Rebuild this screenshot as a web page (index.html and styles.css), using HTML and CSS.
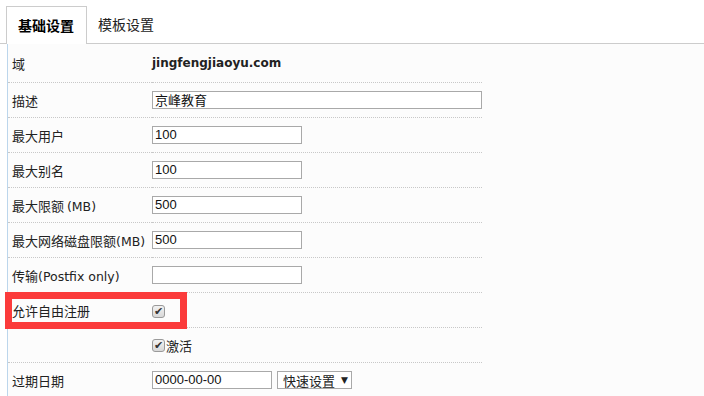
FILE: index.html
```html
<!DOCTYPE html>
<html lang="zh-CN">
<head>
    <meta charset="UTF-8">
    <title>域设置</title>
    <link rel="stylesheet" href="styles.css">
</head>
<body>

    <div class="tabs">
        <div class="tab active">基础设置</div>
        <div class="tab">模板设置</div>
    </div>

    <div class="panel">
        <table class="form">
            <tr class="first">
                <td class="label">域</td>
                <td class="domain">jingfengjiaoyu.com</td>
            </tr>
            <tr>
                <td class="label">描述</td>
                <td><span class="input wide">京峰教育</span></td>
            </tr>
            <tr>
                <td class="label">最大用户</td>
                <td><span class="input">100</span></td>
            </tr>
            <tr>
                <td class="label">最大别名</td>
                <td><span class="input">100</span></td>
            </tr>
            <tr>
                <td class="label">最大限额 <span class="latin">(MB)</span></td>
                <td><span class="input">500</span></td>
            </tr>
            <tr>
                <td class="label">最大网络磁盘限额<span class="latin">(MB)</span></td>
                <td><span class="input">500</span></td>
            </tr>
            <tr>
                <td class="label">传输<span class="latin">(Postfix only)</span></td>
                <td><span class="input"></span></td>
            </tr>
            <tr>
                <td class="label">允许自由注册</td>
                <td><span class="check">&#10004;</span></td>
            </tr>
            <tr>
                <td class="label"></td>
                <td><span class="check">&#10004;</span><span class="check-text">激活</span></td>
            </tr>
            <tr>
                <td class="label">过期日期</td>
                <td>
                    <div class="date-row">
                        <span class="input date">0000-00-00</span>
                        <span class="select">快速设置 <span class="arrow">&#9660;</span></span>
                    </div>
                </td>
            </tr>
        </table>
    </div>

    <div class="highlight"></div>

</body>
</html>
```

FILE: styles.css
```css
body {
    margin: 0;
    background-color: #fff;
    font-family: "DejaVu Sans", "Noto Sans CJK SC", sans-serif;
    font-size: 13px;
    color: #222;
    position: relative;
    height: 396px;
    overflow: hidden;
}
.tabs {
    display: flex;
    padding: 6px 0 0 6px;
    border-bottom: 1px solid #ccc;
}
.tab {
    height: 36px;
    line-height: 36px;
    padding: 0 11px 0 11px;
    font-family: "Noto Sans CJK SC", sans-serif;
    font-size: 14px;
    color: #222;
}
.tab.active {
    width: 57px;
    border: 1px solid #ccc;
    border-bottom: none;
    background-color: #fff;
    margin-bottom: -1px;
    height: 37px;
    color: #000;
    font-weight: bold;
}
.panel {
    margin-left: 7px;
    border-left: 1px solid #bcd6ec;
    background-color: #fcfcfc;
    height: 360px;
}
.form {
    border-collapse: collapse;
    width: 474px;
}
.form td {
    height: 34px;
    padding: 0;
    border-bottom: 1px dotted #c8c8c8;
    vertical-align: middle;
}
.form tr.first td {
    height: 38px;
}
.form td.label {
    width: 140px;
    padding-left: 4px;
    font-family: "Noto Sans CJK SC", sans-serif;
    font-size: 13px;
    white-space: nowrap;
}
.latin {
    font-family: "DejaVu Sans", sans-serif;
    font-size: 12.5px;
}
.domain {
    font-weight: bold;
    font-size: 12px;
    color: #222;
}
.input {
    display: inline-block;
    box-sizing: border-box;
    width: 150px;
    height: 18px;
    line-height: 16px;
    padding: 0 2px;
    border: 1px solid #a9a9a9;
    background-color: #fff;
    font-family: "Liberation Sans", "Noto Sans CJK SC", sans-serif;
    font-size: 13px;
    color: #111;
    vertical-align: middle;
}
.input.wide {
    width: 330px;
    font-family: "Noto Sans CJK SC", sans-serif;
    font-size: 13px;
}
.input.date {
    width: 120px;
}
.date-row {
    display: flex;
    align-items: center;
    gap: 5px;
}
.select {
    display: inline-flex;
    align-items: center;
    box-sizing: border-box;
    width: 75px;
    height: 18px;
    padding: 0 0 0 5px;
    border: 1px solid #a9a9a9;
    background-color: #fff;
    font-family: "Noto Sans CJK SC", sans-serif;
    font-size: 13px;
}
.arrow {
    margin-left: 6px;
    font-family: "DejaVu Sans", sans-serif;
    font-size: 9px;
}
.check {
    display: inline-block;
    box-sizing: border-box;
    width: 13px;
    height: 13px;
    border: 1px solid #9a9a9a;
    border-radius: 3px;
    background: linear-gradient(#f2f2f2, #d8d8d8);
    color: #333;
    font-size: 11px;
    line-height: 11px;
    text-align: center;
    vertical-align: middle;
}
.check-text {
    margin-left: 1px;
    font-family: "Noto Sans CJK SC", sans-serif;
    font-size: 13px;
    vertical-align: middle;
}
.highlight {
    position: absolute;
    left: 5px;
    top: 292px;
    width: 182px;
    height: 37px;
    box-sizing: border-box;
    border: 7px solid #fb3b3b;
}
```
